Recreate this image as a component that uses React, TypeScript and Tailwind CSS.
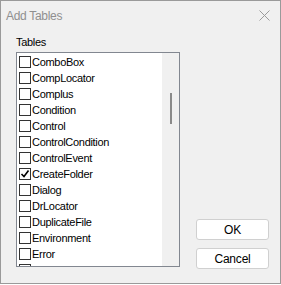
import React from "react";

const tables = [
  { name: "ComboBox", checked: false },
  { name: "CompLocator", checked: false },
  { name: "Complus", checked: false },
  { name: "Condition", checked: false },
  { name: "Control", checked: false },
  { name: "ControlCondition", checked: false },
  { name: "ControlEvent", checked: false },
  { name: "CreateFolder", checked: true },
  { name: "Dialog", checked: false },
  { name: "DrLocator", checked: false },
  { name: "DuplicateFile", checked: false },
  { name: "Environment", checked: false },
  { name: "Error", checked: false },
  { name: "ErrorMessage", checked: false },
];

function CheckBox({ checked }: { checked: boolean }) {
  return (
    <span className="w-[12px] h-[12px] shrink-0 border border-[#333333] bg-white flex items-center justify-center">
      {checked && (
        <svg width="10" height="10" viewBox="0 0 10 10">
          <path d="M1.5 5 L4 7.5 L8.5 1.5" fill="none" stroke="#000" strokeWidth="1.6" />
        </svg>
      )}
    </span>
  );
}

export default function App() {
  return (
    <div className="w-[281px] h-[285px] bg-white">
      <div className="w-[281px] h-[284px] border border-[#9a9a9a] bg-[#f0f0f0] flex flex-col font-['Liberation_Sans',Arial,sans-serif] text-black">
        {/* title bar */}
        <div className="h-[29px] flex items-center justify-between pl-[5px] pr-[10px]">
          <span className="text-[12px] tracking-[-0.3px] text-[#8f8f8f]">Add Tables</span>
          <svg width="11" height="11" viewBox="0 0 11 11">
            <path d="M0.5 0.5 L10.5 10.5 M10.5 0.5 L0.5 10.5" stroke="#9a9a9a" strokeWidth="1" />
          </svg>
        </div>

        <div className="pl-[15px] flex flex-col">
          <span className="text-[11px] tracking-[-0.3px] leading-[13px] mt-[6px] mb-[3px]">Tables</span>
          <div className="flex">
            <div className="w-[164px] h-[215px] border border-[#828790] bg-white flex overflow-hidden">
              <div className="flex-1 pt-[1px] flex flex-col">
                {tables.map((t) => (
                  <div key={t.name} className="h-[16px] shrink-0 flex items-center pl-[2px] gap-[1px]">
                    <CheckBox checked={t.checked} />
                    <span className="text-[11px] tracking-[-0.3px] leading-[16px] whitespace-nowrap">{t.name}</span>
                  </div>
                ))}
              </div>
              <div className="w-[17px] h-full bg-[#f0f0f0] flex justify-center pt-[40px]">
                <div className="w-[2px] h-[31px] bg-[#8a8a8a]" />
              </div>
            </div>

            <div className="ml-[16px] pt-[167px] flex flex-col gap-[8px]">
              <button className="w-[73px] h-[21px] rounded-[3px] border border-[#d0d0d0] bg-white text-[12px] tracking-[-0.2px]">
                OK
              </button>
              <button className="w-[73px] h-[21px] rounded-[3px] border border-[#d0d0d0] bg-white text-[12px] tracking-[-0.2px]">
                Cancel
              </button>
            </div>
          </div>
        </div>
      </div>
    </div>
  );
}
